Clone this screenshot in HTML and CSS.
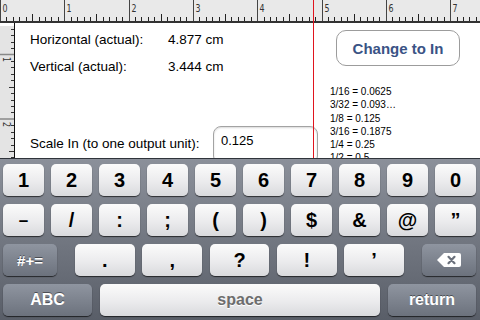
FILE: index.html
```html
<!DOCTYPE html>
<html>
<head>
<meta charset="utf-8">
<title>Ruler</title>
<link rel="stylesheet" href="styles.css">
</head>
<body>
<div class="screen">
  <div class="ruler-top">
    <svg width="480" height="23" viewBox="0 0 480 23">
      <rect x="0" y="0" width="480" height="21" fill="#e9e9e9"/>
      <rect x="0" y="21" width="480" height="2" fill="#333"/>
      <path stroke="#222" stroke-width="1" d="M6.5 17V21M13.5 17V21M19.5 17V21M26.5 17V21M39.5 17V21M45.5 17V21M51.5 17V21M58.5 17V21M71.5 17V21M77.5 17V21M84.5 17V21M90.5 17V21M103.5 17V21M109.5 17V21M116.5 17V21M122.5 17V21M135.5 17V21M141.5 17V21M148.5 17V21M154.5 17V21M167.5 17V21M174.5 17V21M180.5 17V21M186.5 17V21M199.5 17V21M206.5 17V21M212.5 17V21M219.5 17V21M231.5 17V21M238.5 17V21M244.5 17V21M251.5 17V21M264.5 17V21M270.5 17V21M276.5 17V21M283.5 17V21M296.5 17V21M302.5 17V21M309.5 17V21M315.5 17V21M328.5 17V21M334.5 17V21M341.5 17V21M347.5 17V21M360.5 17V21M367.5 17V21M373.5 17V21M379.5 17V21M392.5 17V21M399.5 17V21M405.5 17V21M412.5 17V21M424.5 17V21M431.5 17V21M437.5 17V21M444.5 17V21M457.5 17V21M463.5 17V21M469.5 17V21M476.5 17V21"/>
      <path stroke="#222" stroke-width="1" d="M32.5 14V21M96.5 14V21M161.5 14V21M225.5 14V21M289.5 14V21M354.5 14V21M418.5 14V21"/>
      <path stroke="#444" stroke-width="1" d="M0.5 0V21M64.5 0V21M129.5 0V21M193.5 0V21M257.5 0V21M322.5 0V21M386.5 0V21M450.5 0V21"/>
      <g class="rl-label" fill="#333">
        <text transform="translate(2.5 12) scale(0.72 1)">0</text>
        <text transform="translate(66.5 12) scale(0.72 1)">1</text>
        <text transform="translate(131.5 12) scale(0.72 1)">2</text>
        <text transform="translate(195.5 12) scale(0.72 1)">3</text>
        <text transform="translate(259.5 12) scale(0.72 1)">4</text>
        <text transform="translate(324.5 12) scale(0.72 1)">5</text>
        <text transform="translate(388.5 12) scale(0.72 1)">6</text>
        <text transform="translate(452.5 12) scale(0.72 1)">7</text>
      </g>
    </svg>
  </div>
  <div class="main">
    <div class="ruler-left">
      <svg width="14" height="132" viewBox="0 0 14 132">
        <rect x="0" y="0" width="14" height="132" fill="#e4e4e4"/>
        <path stroke="#333" stroke-width="1" d="M11 3.5H14M11 9.5H14M11 16.5H14M11 22.5H14M11 35.5H14M11 41.5H14M11 48.5H14M11 54.5H14M11 67.5H14M11 74.5H14M11 80.5H14M11 86.5H14M11 99.5H14M11 106.5H14M11 112.5H14M11 119.5H14M11 131.5H14"/>
        <path stroke="#333" stroke-width="1" d="M9 61.5H14M9 125.5H14"/>
        <path stroke="#888" stroke-width="1.5" d="M0 28.5H14M0 93H14"/>
        <g class="rl-label" fill="#333">
          <text transform="translate(3 31) rotate(90) scale(0.72 1)">1</text>
          <text transform="translate(3 96) rotate(90) scale(0.72 1)">2</text>
        </g>
      </svg>
    </div>
    <div class="content">
      <div class="measures">
        <div class="mrow first"><span class="lbl">Horizontal (actual):</span><span class="val">4.877 cm</span></div>
        <div class="mrow"><span class="lbl">Vertical (actual):</span><span class="val">3.444 cm</span></div>
        <div class="scale-row">
          <span class="scale-lbl">Scale In (to one output unit):</span>
          <input class="field" type="text" value="0.125">
        </div>
      </div>
      <div class="side">
        <button class="change" type="button">Change to In</button>
        <ul class="fractions">
          <li>1/16 = 0.0625</li>
          <li>3/32 = 0.093…</li>
          <li>1/8 = 0.125</li>
          <li>3/16 = 0.1875</li>
          <li>1/4 = 0.25</li>
          <li>1/2 = 0.5</li>
        </ul>
      </div>
    </div>
  </div>
  <div class="keyboard">
    <div class="krow tenkeys">
      <span class="key">1</span><span class="key">2</span><span class="key">3</span><span class="key">4</span><span class="key">5</span><span class="key">6</span><span class="key">7</span><span class="key">8</span><span class="key">9</span><span class="key">0</span>
    </div>
    <div class="krow tenkeys">
      <span class="key dash">–</span><span class="key">/</span><span class="key">:</span><span class="key">;</span><span class="key">(</span><span class="key">)</span><span class="key">$</span><span class="key">&amp;</span><span class="key">@</span><span class="key">”</span>
    </div>
    <div class="krow third">
      <span class="key dark sym">#+=</span>
      <div class="punct">
        <span class="key">.</span><span class="key">,</span><span class="key">?</span><span class="key">!</span><span class="key">’</span>
      </div>
      <span class="key dark">
        <svg width="24" height="14" viewBox="0 0 24 14">
          <path d="M7 0H22a2 2 0 0 1 2 2V12a2 2 0 0 1-2 2H7L0 7Z" fill="#fff"/>
          <path d="M11.5 3.8L17.5 10.2M17.5 3.8L11.5 10.2" stroke="#6b717c" stroke-width="2.2" stroke-linecap="round"/>
        </svg>
      </span>
    </div>
    <div class="krow fourth">
      <span class="key dark">ABC</span>
      <span class="key space">space</span>
      <span class="key dark">return</span>
    </div>
  </div>
  <div class="marker"></div>
</div>
</body>
</html>
```

FILE: styles.css
```css
html, body {
  margin: 0;
  padding: 0;
  background: #fff;
}

.screen {
  position: relative;
  width: 480px;
  height: 320px;
  overflow: hidden;
  font-family: "Liberation Sans", Arial, sans-serif;
  display: flex;
  flex-direction: column;
}

.ruler-top {
  height: 23px;
  flex: none;
}

.ruler-top svg,
.ruler-left svg {
  display: block;
}

.rl-label {
  font-family: "DejaVu Sans", sans-serif;
  font-size: 11px;
}

.main {
  height: 135px;
  flex: none;
  display: flex;
  overflow: hidden;
}

.ruler-left {
  width: 14px;
  padding-top: 3px;
  border-right: 1px solid #111;
  flex: none;
}

.content {
  flex: 1;
  display: flex;
  overflow: hidden;
}

.measures {
  width: 300px;
  padding-left: 15px;
  flex: none;
  font-size: 13.5px;
  color: #000;
}

.mrow {
  display: grid;
  grid-template-columns: 138px auto;
  line-height: 16px;
  margin-top: 11px;
}

.mrow.first {
  margin-top: 9px;
}

.scale-row {
  display: flex;
  align-items: flex-start;
  margin-top: 51px;
}

.scale-lbl {
  width: 183px;
  flex: none;
  line-height: 16px;
  margin-top: 10px;
}

.field {
  width: 105px;
  height: 38px;
  box-sizing: border-box;
  margin: 0;
  border: 1px solid #a3a3a3;
  border-radius: 8px;
  box-shadow: inset 0 1px 2px rgba(0, 0, 0, 0.15);
  padding: 4px 7px 14px;
  font-family: "Liberation Sans", Arial, sans-serif;
  font-size: 13px;
  color: #000;
  background: #fff;
  outline: none;
}

.side {
  flex: 1;
  padding-left: 0;
}

.change {
  display: block;
  width: 124px;
  height: 36px;
  margin: 7px 0 0 6px;
  padding: 0;
  border: 1px solid #9c9c9c;
  border-radius: 10px;
  background: #fff;
  font-family: "Liberation Sans", Arial, sans-serif;
  font-weight: bold;
  font-size: 15px;
  color: #3a5385;
}

.fractions {
  list-style: none;
  margin: 19px 0 0;
  padding: 0;
  font-size: 10px;
  line-height: 13.3px;
  color: #000;
}

.keyboard {
  height: 162px;
  flex: none;
  box-sizing: border-box;
  border-top: 1px solid #30343b;
  padding: 5px 4px 0 3px;
  background: linear-gradient(#8b909a, #595e68);
  display: flex;
  flex-direction: column;
  gap: 8px;
}

.krow {
  height: 32px;
  display: flex;
  gap: 7px;
}

.tenkeys .key {
  flex: 1;
}

.third {
  display: grid;
  grid-template-columns: 54px 1fr 54px;
  gap: 18px;
}

.punct {
  display: flex;
  gap: 7.5px;
}

.punct .key {
  flex: 1;
}

.fourth {
  display: grid;
  grid-template-columns: 89px 1fr 88px;
  gap: 8px;
}

.key {
  display: flex;
  align-items: center;
  justify-content: center;
  border-radius: 5px;
  background: linear-gradient(#fbfbfb, #ebebed 55%, #d9dadd);
  box-shadow: 0 1px 1px rgba(0, 0, 0, 0.65);
  font-weight: bold;
  font-size: 20px;
  line-height: 1;
  color: #000;
}

.key.dash {
  font-size: 17px;
}

.key.dark {
  background: linear-gradient(#8f95a0, #6c727d);
  color: #fff;
  font-size: 16px;
  text-shadow: 0 -1px 0 rgba(0, 0, 0, 0.45);
}

.key.sym {
  font-size: 15px;
}

.key.space {
  color: #6d6d6d;
  font-size: 16px;
  text-shadow: 0 1px 0 #fff;
}

.marker {
  position: absolute;
  z-index: 2;
  left: 313px;
  top: 0;
  width: 1px;
  height: 158px;
  background: #e0141e;
}
```
